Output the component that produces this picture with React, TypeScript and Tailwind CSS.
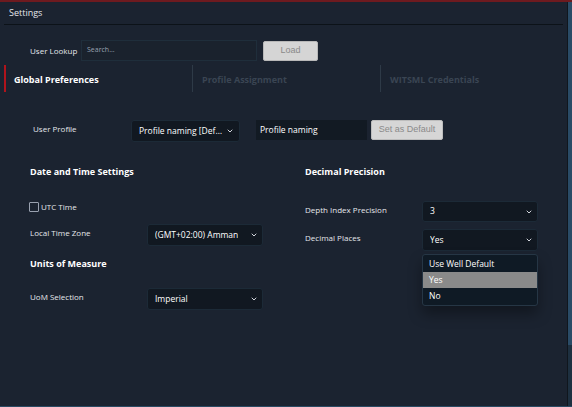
import { ChevronDown } from "lucide-react";

const font = { fontFamily: '"Open Sans", "Liberation Sans", sans-serif' };

function FakeSelect({ value, className }: { value: string; className: string }) {
  return (
    <div
      className={`flex items-center justify-between bg-[#111821] border border-[#1c2a37] rounded-[3px] pl-[7px] pr-[4px] text-[8.5px] font-medium text-white ${className}`}
    >
      <span className="truncate">{value}</span>
      <ChevronDown size={8} strokeWidth={3} className="text-gray-300 shrink-0" />
    </div>
  );
}

export default function App() {
  return (
    <div
      className="w-[572px] h-[407px] bg-[#1b2330] flex border-t-2 border-[#6e1a1f] border-b border-b-[#2a4a63] overflow-hidden"
      style={font}
    >
      <div className="flex-1 flex flex-col border-r border-[#10161d]">
        {/* Header */}
        <div className="mx-[4px] h-[23px] px-[5px] flex items-center border-b border-[#0c1218] text-[9px] text-gray-200">
          Settings
        </div>

        {/* User lookup */}
        <div className="mt-[15px] pl-[30px] flex items-center h-[21px]">
          <span className="w-[51px] shrink-0 whitespace-nowrap text-[8px] font-medium text-gray-200">User Lookup</span>
          <div className="w-[176px] h-[21px] border border-[#1f2e3b] bg-[#1a222d] flex items-center pl-[5px] text-[7px] text-gray-400">
            Search...
          </div>
          <button className="ml-[6px] w-[55px] h-[20px] bg-[#d5d5d5] border border-[#b8b8b8] rounded-[2px] text-[9px] text-[#8a8a8a]" style={{ fontFamily: '"Liberation Sans", sans-serif' }}>
            Load
          </button>
        </div>

        {/* Tabs */}
        <div className="mt-[4px] ml-[4px] flex h-[27px]">
          <div className="w-[188px] flex items-center border-l-2 border-[#b0141c] pl-[8px] pt-[2px] text-[9px] font-bold text-white">
            Global Preferences
          </div>
          <div className="w-[188px] flex items-center border-l border-[#2e3a47] pl-[9px] pt-[2px] text-[9px] font-bold text-[#3a4553]">
            Profile Assignment
          </div>
          <div className="flex-1 flex items-center border-l border-[#2e3a47] pl-[9px] pt-[2px] text-[9px] font-bold text-[#3a4553]">
            WITSML Credentials
          </div>
        </div>

        {/* User profile */}
        <div className="mt-[28px] pl-[33px] flex items-start">
          <span className="w-[98px] pt-[3px] text-[8px] font-medium text-gray-200">User Profile</span>
          <FakeSelect value="Profile naming [Default]" className="w-[109px] h-[22px] pr-[5px]" />
          <div className="ml-[16px] w-[111px] h-[20px] bg-[#121a23] flex items-center pl-[4px] text-[8.5px] font-medium text-white">
            Profile naming
          </div>
          <button className="ml-[4px] w-[72px] h-[20px] bg-[#d6d6d6] border border-[#bdbdbd] rounded-[2px] text-[9px] text-[#8a8a8a]" style={{ fontFamily: '"Liberation Sans", sans-serif' }}>
            Set as Default
          </button>
        </div>

        {/* Two columns */}
        <div className="mt-[23px] pl-[30px] flex">
          <div className="w-[275px] flex flex-col">
            <div className="h-[14px] flex items-center text-[9px] font-bold text-white">Date and Time Settings</div>
            <div className="mt-[22px] h-[12px] flex items-center -ml-[1px]">
              <span className="w-[10px] h-[10px] border border-gray-400 rounded-[1px]" />
              <span className="ml-[2px] text-[8px] font-medium text-gray-200">UTC Time</span>
            </div>
            <div className="mt-[11px] flex items-start">
              <span className="w-[117px] pt-[3px] text-[8px] font-medium text-gray-200">Local Time Zone</span>
              <FakeSelect value="(GMT+02:00) Amman" className="w-[116px] h-[22px]" />
            </div>
            <div className="mt-[11px] h-[14px] flex items-center text-[9px] font-bold text-white">Units of Measure</div>
            <div className="mt-[17px] flex items-start">
              <span className="w-[117px] pt-[3px] text-[8px] font-medium text-gray-200">UoM Selection</span>
              <FakeSelect value="Imperial" className="w-[116px] h-[22px]" />
            </div>
          </div>

          <div className="flex flex-col">
            <div className="h-[14px] flex items-center text-[9px] font-bold text-white">Decimal Precision</div>
            <div className="mt-[22px] flex items-start">
              <span className="w-[117px] pt-[3px] text-[8px] font-medium text-gray-200">Depth Index Precision</span>
              <FakeSelect value="3" className="w-[116px] h-[21px]" />
            </div>
            <div className="mt-[7px] flex items-start">
              <span className="w-[117px] pt-[3px] text-[8px] font-medium text-gray-200">Decimal Places</span>
              <div className="flex flex-col">
                <FakeSelect value="Yes" className="w-[116px] h-[22px]" />
                <div className="mt-[3px] w-[116px] bg-[#0f1a25] border border-[#263645] rounded-[3px] py-[1px] text-[8.5px] font-medium text-white shadow-[0_8px_14px_rgba(0,0,0,0.35)]">
                  <div className="h-[16px] flex items-center pl-[6px]">Use Well Default</div>
                  <div className="h-[16px] flex items-center pl-[6px] bg-[#8a8a8a]">Yes</div>
                  <div className="h-[16px] flex items-center pl-[6px]">No</div>
                </div>
              </div>
            </div>
          </div>
        </div>
      </div>
      <div className="w-[4px] flex flex-col">
        <div className="h-[343px] bg-[#2a4b66]" />
        <div className="flex-1 bg-[#1e3040]" />
      </div>
    </div>
  );
}
